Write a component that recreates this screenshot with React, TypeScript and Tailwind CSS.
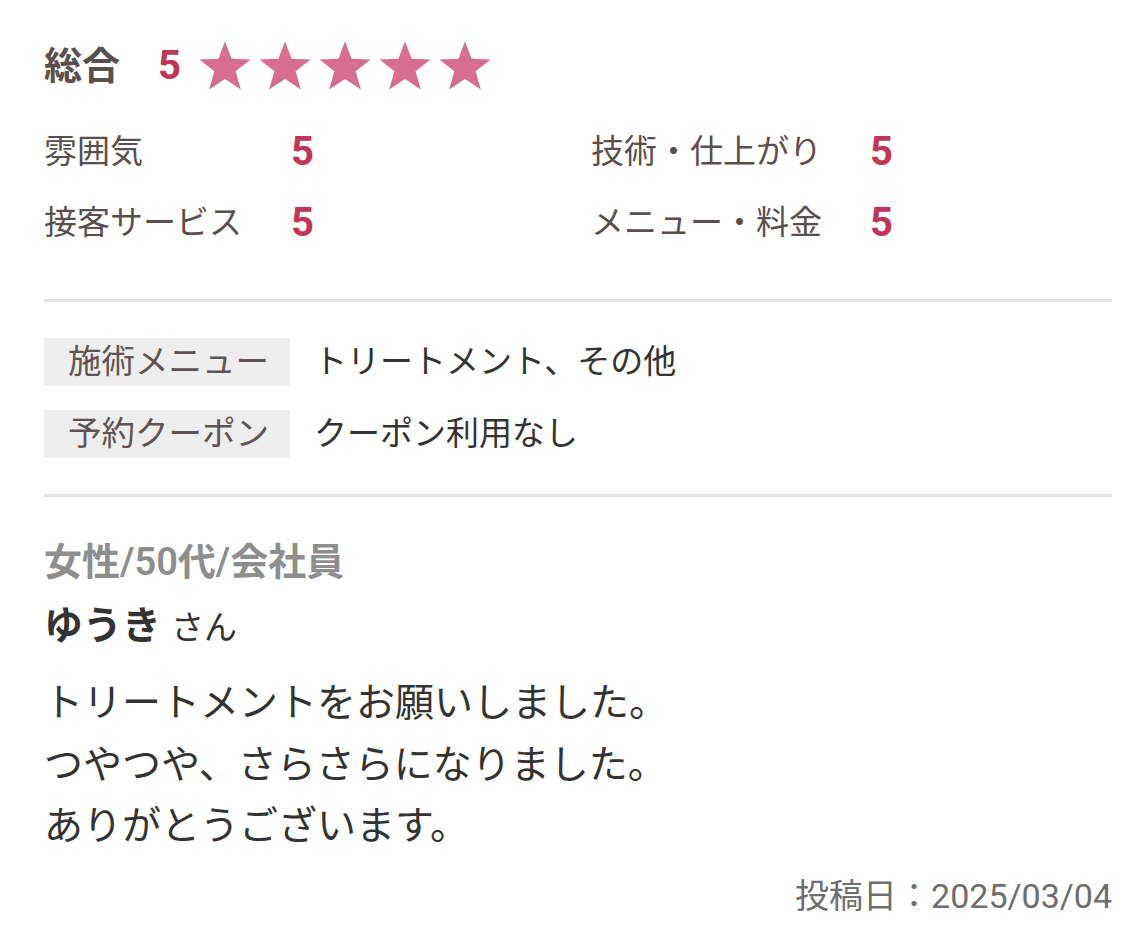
import React from "react";

const font = { fontFamily: 'Roboto, "Noto Sans CJK JP", sans-serif' };

function Star() {
  return (
    <svg width="56" height="52" viewBox="0 0 24 23" className="shrink-0">
      <polygon
        points="12,0.5 14.9,8.3 23.3,8.6 16.7,13.8 19,21.9 12,17.2 5,21.9 7.3,13.8 0.7,8.6 9.1,8.3"
        fill="#d76e8d"
      />
    </svg>
  );
}

function Score({ label, value }: { label: string; value: number }) {
  return (
    <>
      <p className="text-[33px] leading-[71px] text-[#5a4f4f]">{label}</p>
      <p className="text-[40px] leading-[71px] font-bold text-[#c03558]">{value}</p>
    </>
  );
}

function Tag({ name, value }: { name: string; value: string }) {
  return (
    <div className="flex items-center h-[48px]">
      <div className="w-[246px] h-[48px] bg-[#eeeeee] pl-[24px] flex items-center text-[33.5px] leading-[48px] text-[#5d5454]">
        {name}
      </div>
      <p className="ml-[24px] text-[33px] leading-[48px] text-[#333333]">{value}</p>
    </div>
  );
}

export default function App() {
  return (
    <div className="bg-white w-[1139px] h-[950px] pl-[44px] pr-[27px] pt-[36px]" style={font}>
      {/* overall */}
      <div className="flex items-center h-[60px]">
        <p className="text-[38px] font-bold text-[#5a4f4f]">総合</p>
        <p className="ml-[38px] text-[40px] font-bold text-[#c03558]">5</p>
        <div className="ml-[16px] flex gap-[4px]">
          <Star />
          <Star />
          <Star />
          <Star />
          <Star />
        </div>
      </div>

      <div className="mt-[20px] grid grid-cols-[247px_300px_279px_1fr] items-center">
        <Score label="雰囲気" value={5} />
        <Score label="技術・仕上がり" value={5} />
        <Score label="接客サービス" value={5} />
        <Score label="メニュー・料金" value={5} />
      </div>

      <div className="mt-[41px] h-[3px] bg-[#e2e2e2]" />

      <div className="mt-[36px] flex flex-col gap-[24px]">
        <Tag name="施術メニュー" value="トリートメント、その他" />
        <Tag name="予約クーポン" value="クーポン利用なし" />
      </div>

      <div className="mt-[36px] h-[3px] bg-[#e2e2e2]" />

      <p className="mt-[40px] text-[38px] leading-[50px] font-semibold text-[#8e8e8e]">女性/50代/会社員</p>
      <p className="mt-[14px] leading-[50px] text-[#333333]">
        <span className="text-[39px] font-bold">ゆうき</span>
        <span className="ml-[10px] text-[33px]">さん</span>
      </p>

      <div className="mt-[14px] text-[39px] leading-[61.5px] text-[#333333]">
        <p>トリートメントをお願いしました。</p>
        <p>つやつや、さらさらになりました。</p>
        <p>ありがとうございます。</p>
      </div>

      <p className="mt-[13px] text-right text-[34px] leading-[50px] text-[#6e6e6e]">投稿日：2025/03/04</p>
    </div>
  );
}
